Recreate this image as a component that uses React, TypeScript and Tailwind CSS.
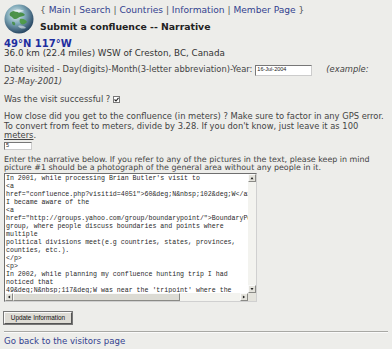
import React from "react";

const lines = [
  "In 2001, while processing Brian Butler's visit to",
  "<a",
  'href="confluence.php?visitid=4051">60&deg;N&nbsp;102&deg;W</a>',
  "I became aware of the",
  "<a",
  'href="http://groups.yahoo.com/group/boundarypoint/">BoundaryPoint</a>',
  "group, where people discuss boundaries and points where",
  "multiple",
  "political divisions meet(e.g countries, states, provinces,",
  "counties, etc.).",
  "</p>",
  "<p>",
  "In 2002, while planning my confluence hunting trip I had",
  "noticed that",
  "49&deg;N&nbsp;117&deg;W was near the 'tripoint' where the",
];

function Globe() {
  return (
    <svg width="30" height="30" viewBox="0 0 30 30" className="shrink-0">
      <defs>
        <radialGradient id="g1" cx="0.4" cy="0.35" r="0.7">
          <stop offset="0" stopColor="#e8f4f4" />
          <stop offset="0.45" stopColor="#7fa9b8" />
          <stop offset="1" stopColor="#1d3a58" />
        </radialGradient>
      </defs>
      <circle cx="15" cy="15" r="14.5" fill="url(#g1)" />
      <path d="M6 9 C9 6 13 7 15 9 C17 8 20 9 21 11 C19 13 16 12 14 14 C12 16 9 15 8 13 C6 12 5 11 6 9 Z" fill="#3f8a3a" opacity="0.9" />
      <path d="M16 15 C19 14 22 16 23 18 C21 20 19 21 17 20 C16 19 15 17 16 15 Z" fill="#4b9a40" opacity="0.9" />
      <path d="M8 18 C10 17 12 19 11 21 C9 22 8 20 8 18 Z" fill="#3f8a3a" opacity="0.8" />
      <path d="M9 7 C12 5 17 5 20 7 C18 8 14 8 12 8 Z" fill="#ffffff" opacity="0.6" />
      <path d="M14 22 C17 21 21 22 22 24 C19 25 16 25 14 22 Z" fill="#ffffff" opacity="0.5" />
    </svg>
  );
}

function Arrow({ dir }: { dir: "up" | "down" | "left" | "right" }) {
  const pts =
    dir === "up"
      ? "4,2.5 6,5.5 2,5.5"
      : dir === "down"
      ? "2,2.5 6,2.5 4,5.5"
      : dir === "left"
      ? "5.5,2 5.5,6 2.5,4"
      : "2.5,2 2.5,6 5.5,4";
  return (
    <div className="w-[8px] h-[8px] shrink-0 bg-[#e4e3dc] border border-t-[#fafafa] border-l-[#fafafa] border-r-[#8a8a86] border-b-[#8a8a86] flex items-center justify-center">
      <svg width="8" height="8" viewBox="0 0 8 8">
        <polygon points={pts} fill="#222" />
      </svg>
    </div>
  );
}

export default function App() {
  const link = "text-[#33428f]";
  return (
    <div className="w-[392px] min-h-[349px] overflow-hidden bg-[#ededea] px-[4px] pt-[4px] text-[#444] font-['DejaVu_Sans',Verdana,sans-serif] text-[8.35px] leading-[9.5px]">
      <div className="flex gap-[6px]">
        <Globe />
        <div className="pt-[1px]">
          <div className="text-[9.1px] leading-[11px] whitespace-nowrap text-[#555]">
            {"{ "}
            <span className={link}>Main</span> | <span className={link}>Search</span> |{" "}
            <span className={link}>Countries</span> | <span className={link}>Information</span> |{" "}
            <span className={link}>Member Page</span>
            {" }"}
          </div>
          <div className="mt-[5px] font-bold text-[9.3px] leading-[12px] text-[#222] whitespace-nowrap">
            Submit a confluence -- Narrative
          </div>
        </div>
      </div>

      <div className="mt-[3.5px] font-bold text-[10px] leading-[11px] text-[#1e2ea0]">49°N 117°W</div>
      <div className="text-[8.75px] leading-[9px] text-[#333] whitespace-nowrap">
        36.0 km (22.4 miles) WSW of Creston, BC, Canada
      </div>

      <div className="mt-[7px] h-[11px] flex items-center whitespace-nowrap">
        <span>Date visited - Day(digits)-Month(3-letter abbreviation)-Year:</span>
        <div className="ml-[3px] w-[57px] h-[11px] bg-white border border-t-[#777] border-l-[#777] border-r-[#ccc] border-b-[#ccc] flex items-center pl-[1px] font-['Liberation_Sans',Arial,sans-serif] text-[5.5px] text-[#222]">
          16-Jul-2004
        </div>
        <span className="ml-[14px] italic">(example:</span>
      </div>
      <div className="mt-[1.5px] italic">23-May-2001)</div>

      <div className="mt-[8px] flex items-center whitespace-nowrap">
        <span>Was the visit successful ?</span>
        <div className="ml-[3px] w-[7px] h-[7px] bg-white border border-[#777] flex items-center justify-center">
          <svg width="5" height="5" viewBox="0 0 5 5">
            <path d="M0.5 2.5 L2 4 L4.5 0.8" stroke="#222" strokeWidth="1.1" fill="none" />
          </svg>
        </div>
      </div>

      <div className="mt-[8px]">
        How close did you get to the confluence (in meters) ? Make sure to factor in any GPS error. To convert
        from feet to meters, divide by 3.28. If you don't know, just leave it as 100{" "}
        <span className="underline">meters</span>.
      </div>
      <div className="mt-[1.25px] w-[28px] h-[8px] bg-white border border-t-[#777] border-l-[#777] border-r-[#ccc] border-b-[#ccc] flex items-center pl-[1px] font-['Liberation_Sans',Arial,sans-serif] text-[5.5px] text-[#222]">
        5
      </div>

      <div className="mt-[5.75px] w-[388px] text-[7.95px] leading-[8.75px]">
        Enter the narrative below. If you refer to any of the pictures in the text, please keep in mind picture #1
        should be a photograph of the general area without any people in it.
      </div>

      <div className="w-[253px] h-[129px] bg-white border border-t-[#6f6f6f] border-l-[#6f6f6f] border-r-[#d0d0d0] border-b-[#d0d0d0] flex flex-col">
        <div className="flex flex-1 min-h-0">
          <pre className="flex-1 min-w-0 overflow-hidden pl-[1px] pt-[1px] font-['Liberation_Mono','Courier_New',monospace] text-[6.6px] leading-[8px] text-[#2a2a2a]">
            {lines.join("\n")}
          </pre>
          <div className="w-[8px] flex flex-col bg-[#f3f3ef]">
            <Arrow dir="up" />
            <div className="flex-1" />
            <Arrow dir="down" />
          </div>
        </div>
        <div className="h-[8px] flex bg-[#f3f3ef]">
          <Arrow dir="left" />
          <div className="w-[167px] h-[8px] bg-[#dcdbd4] border border-t-[#fafafa] border-l-[#fafafa] border-r-[#8a8a86] border-b-[#8a8a86]" />
          <div className="flex-1" />
          <Arrow dir="right" />
          <div className="w-[8px] bg-[#e4e3dc]" />
        </div>
      </div>

      <div className="mt-[9.5px] w-[68px] h-[12px] bg-[#dedcd5] border border-t-[#fafafa] border-l-[#fafafa] border-r-[#555] border-b-[#555] outline outline-1 outline-[#777] flex items-center justify-center font-['Liberation_Sans',Arial,sans-serif] text-[6.4px] text-[#111] whitespace-nowrap">
        Update Information
      </div>

      <div className="mt-[7px] h-[2px] border-t border-t-[#a8a8a4] border-b border-b-[#fafafa] w-[384px]" />

      <div className={`mt-[4.5px] text-[8.6px] ${link}`}>Go back to the visitors page</div>
    </div>
  );
}
